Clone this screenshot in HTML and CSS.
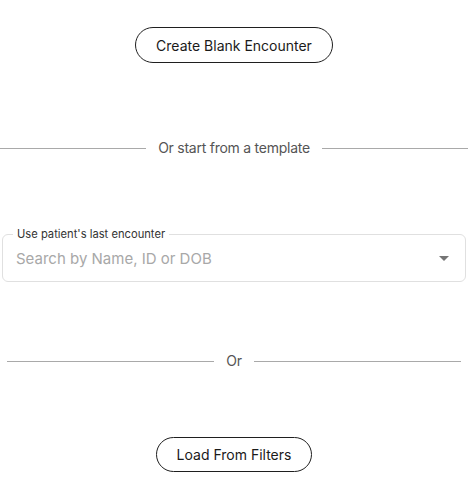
FILE: index.html
```html
<!DOCTYPE html>
<html>
<head>
<meta charset="utf-8">
<link rel="stylesheet" href="styles.css">
</head>
<body>
<div class="page">
  <div class="row-center top">
    <button class="pill pill-lg">Create Blank Encounter</button>
  </div>
  <div class="divider divider-full">
    <span class="line"></span>
    <span class="divider-text">Or start from a template</span>
    <span class="line"></span>
  </div>
  <div class="field">
    <span class="field-label">Use patient's last encounter</span>
    <span class="placeholder">Search by Name, ID or DOB</span>
    <svg class="caret" width="10" height="5" viewBox="0 0 10 5"><path d="M0 0h10L5 5z" fill="#757575"/></svg>
  </div>
  <div class="divider divider-inset">
    <span class="line"></span>
    <span class="divider-text">Or</span>
    <span class="line"></span>
  </div>
  <div class="row-center bottom">
    <button class="pill pill-sm">Load From Filters</button>
  </div>
</div>
</body>
</html>
```
FILE: styles.css
```css
* { box-sizing: border-box; }
html, body { margin: 0; padding: 0; background: #fff; }
body { font-family: Inter, "Noto Sans", sans-serif; color: #222; }
.page { width: 468px; display: flex; flex-direction: column; }
.row-center { display: flex; justify-content: center; }
.top { padding-top: 27px; }
.pill {
  font-family: inherit;
  font-size: 14px;
  color: #1a1a1a;
  background: #fff;
  border: 1px solid #1f1f1f;
  border-radius: 999px;
  display: flex; align-items: center; justify-content: center;
  padding: 0;
}
.pill-lg { width: 198px; height: 36px; }
.pill-sm { width: 156px; height: 35px; }
.divider { display: flex; align-items: center; gap: 12px; }
.divider .line { flex: 1; height: 1px; background: #a9a9a9; }
.divider-text { font-size: 14px; color: #555; line-height: 20px; letter-spacing: -0.25px; }
.divider-full { margin-top: 75px; }
.divider-inset { margin: 69px 7px 0; }
.field {
  position: relative;
  margin: 76px 2px 0 2px;
  height: 48px;
  border: 1px solid #e0e0e0;
  border-radius: 6px;
  display: flex; align-items: center;
  padding: 0 14px 0 13px;
}
.field-label {
  position: absolute;
  left: 10px; top: -8px;
  padding: 0 4px;
  background: #fff;
  font-size: 11.2px;
  line-height: 14px;
  color: #333;
}
.placeholder { flex: 1; font-size: 15px; color: #a8a8a8; padding-top: 1px; }
.caret { margin-right: 2px; }
.bottom { padding-top: 66px; }
button { cursor: pointer; }
```
